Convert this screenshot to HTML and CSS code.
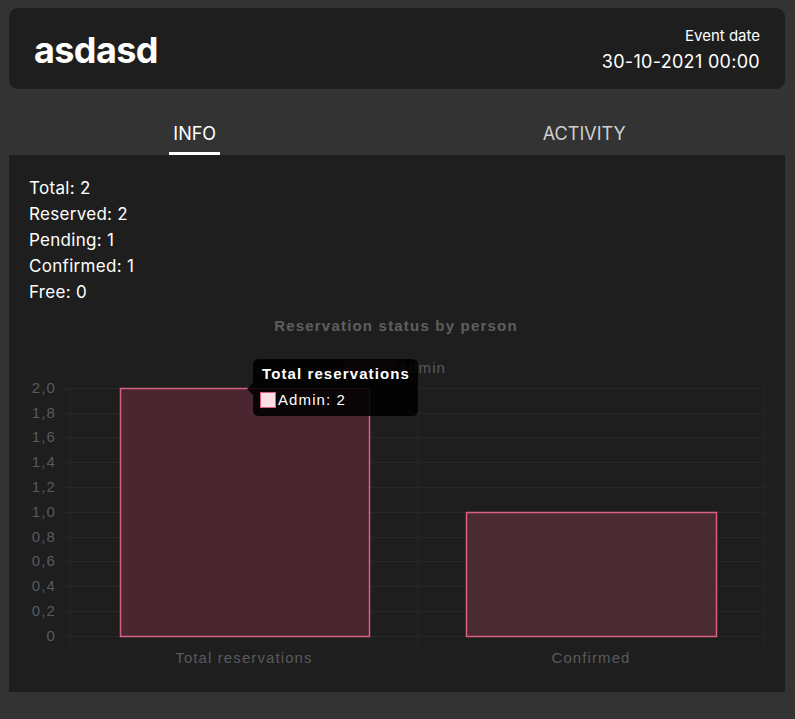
FILE: index.html
```html
<!DOCTYPE html>
<html>
<head>
<meta charset="utf-8">
<link rel="stylesheet" href="styles.css">
</head>
<body>
<div class="page">
  <header class="event-card">
    <h1 class="event-title">asdasd</h1>
    <div class="event-date">
      <div class="date-label">Event date</div>
      <div class="date-value">30-10-2021 00:00</div>
    </div>
  </header>
  <nav class="tabs">
    <div class="tab tab-active"><span class="tab-label">INFO</span></div>
    <div class="tab"><span class="tab-label">ACTIVITY</span></div>
  </nav>
  <section class="panel">
    <ul class="stats">
      <li>Total: 2</li>
      <li>Reserved: 2</li>
      <li>Pending: 1</li>
      <li>Confirmed: 1</li>
      <li>Free: 0</li>
    </ul>
    <svg class="chart" width="776" height="387" viewBox="0 0 776 387">
      <text class="chart-title" x="387" y="26" text-anchor="middle">Reservation status by person</text>
      <rect x="335.5" y="55.5" width="50" height="13" fill="#4a2730" stroke="#6a3040" stroke-width="1"/>
      <text class="axis-text" x="389" y="68">Admin</text>
      <g stroke="#272727" stroke-width="1">
        <line x1="52" y1="83.5" x2="755" y2="83.5"/>
        <line x1="52" y1="108.5" x2="755" y2="108.5"/>
        <line x1="52" y1="132.5" x2="755" y2="132.5"/>
        <line x1="52" y1="157.5" x2="755" y2="157.5"/>
        <line x1="52" y1="182.5" x2="755" y2="182.5"/>
        <line x1="52" y1="207.5" x2="755" y2="207.5"/>
        <line x1="52" y1="232.5" x2="755" y2="232.5"/>
        <line x1="52" y1="256.5" x2="755" y2="256.5"/>
        <line x1="52" y1="281.5" x2="755" y2="281.5"/>
        <line x1="52" y1="306.5" x2="755" y2="306.5"/>
        <line x1="52" y1="331.5" x2="755" y2="331.5"/>
        <line x1="61.5" y1="83" x2="61.5" y2="340"/>
        <line x1="408.5" y1="83" x2="408.5" y2="340"/>
        <line x1="755.5" y1="83" x2="755.5" y2="340"/>
      </g>
      <g class="axis-text" text-anchor="end">
        <text x="47" y="88">2,0</text>
        <text x="47" y="113">1,8</text>
        <text x="47" y="137">1,6</text>
        <text x="47" y="162">1,4</text>
        <text x="47" y="187">1,2</text>
        <text x="47" y="212">1,0</text>
        <text x="47" y="237">0,8</text>
        <text x="47" y="261">0,6</text>
        <text x="47" y="286">0,4</text>
        <text x="47" y="311">0,2</text>
        <text x="47" y="336">0</text>
      </g>
      <rect x="111.5" y="83.5" width="249" height="248" fill="#4a2730" stroke="#d9607e" stroke-width="1.5"/>
      <rect x="457.5" y="207.5" width="250" height="124" fill="#4a2a33" stroke="#d9607e" stroke-width="1.5"/>
      <g class="axis-text" text-anchor="middle">
        <text x="235" y="358">Total reservations</text>
        <text x="582" y="358">Confirmed</text>
      </g>
      <g class="tooltip">
        <path d="M250 54 H403 Q409 54 409 60 V105 Q409 111 403 111 H250 Q244 111 244 105 V90 L238 84 L244 78 V60 Q244 54 250 54 Z" fill="#000" fill-opacity="0.88"/>
        <text class="tip-title" x="253" y="74">Total reservations</text>
        <rect x="251.5" y="87.5" width="15" height="15" fill="#fcdde5" stroke="#d9607e" stroke-width="1"/>
        <text class="tip-body" x="269" y="100">Admin: 2</text>
      </g>
    </svg>
  </section>
</div>
</body>
</html>
```
FILE: styles.css
```css
html, body {
  margin: 0;
  padding: 0;
  background: #333333;
}
body {
  font-family: Inter, "Open Sans", sans-serif;
  color: #ffffff;
}
.page {
  width: 795px;
  height: 719px;
  padding: 8px 10px 0 9px;
  box-sizing: border-box;
}
.event-card {
  height: 81px;
  background: #1e1e1e;
  border-radius: 9px;
  display: flex;
  justify-content: space-between;
  align-items: center;
  padding: 0 25px;
  box-sizing: border-box;
}
.event-title {
  margin: 0;
  font-size: 36px;
  font-weight: 700;
  letter-spacing: -0.6px;
  line-height: 1;
  padding-top: 2px;
}
.event-date {
  text-align: right;
  padding-top: 4px;
}
.date-label {
  font-size: 15px;
  line-height: 18px;
}
.date-value {
  font-size: 18px;
  letter-spacing: 0.3px;
  line-height: 24px;
  margin-top: 5px;
}
.tabs {
  display: grid;
  grid-template-columns: 1fr 1fr;
  height: 66px;
  margin-left: -9px;
  margin-right: 6px;
}
.tab {
  display: flex;
  justify-content: center;
  align-items: flex-end;
}
.tab-label {
  font-size: 18px;
  line-height: 20px;
  padding-bottom: 8px;
  color: #d0d0d0;
  border-bottom: 3px solid transparent;
  padding-left: 4px;
  padding-right: 4px;
}
.tab-active .tab-label {
  color: #ffffff;
  border-bottom-color: #ffffff;
}
.panel {
  background: #1e1e1e;
  height: 537px;
  box-sizing: border-box;
  padding-top: 20px;
}
.stats {
  list-style: none;
  margin: 0;
  padding: 0 0 0 20px;
}
.stats li {
  font-size: 17px;
  letter-spacing: 0.3px;
  line-height: 26px;
}
.chart {
  display: block;
}
.chart-title {
  font-family: "Liberation Sans", Arial, sans-serif;
  font-size: 15px;
  font-weight: 700;
  letter-spacing: 1.2px;
  fill: #5e5e5e;
}
.axis-text {
  font-family: "Liberation Sans", Arial, sans-serif;
  font-size: 15px;
  letter-spacing: 1.1px;
  fill: #5a5a5a;
}
.tip-title {
  font-family: "Liberation Sans", Arial, sans-serif;
  font-size: 15px;
  font-weight: 700;
  letter-spacing: 1.1px;
  fill: #ffffff;
}
.tip-body {
  font-family: "Liberation Sans", Arial, sans-serif;
  font-size: 15px;
  letter-spacing: 1.1px;
  fill: #ffffff;
}
```
